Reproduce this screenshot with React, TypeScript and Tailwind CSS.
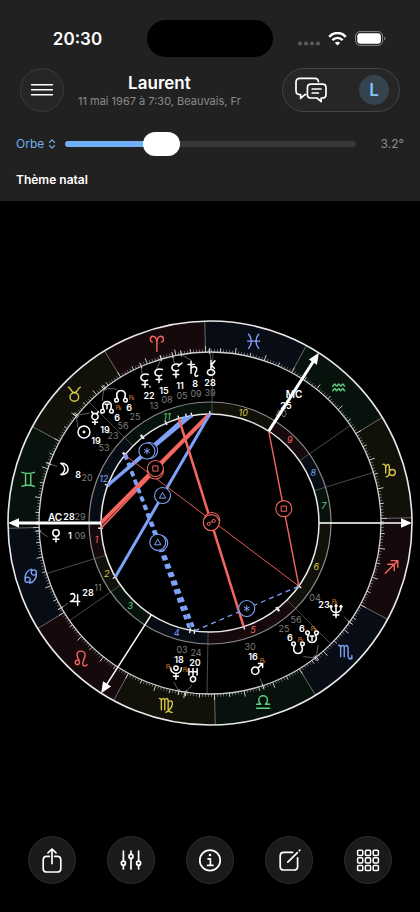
import { useState } from "react";
import type { ReactNode } from "react";

const RED = "#f4665f";
const YELLOW = "#d8c847";
const GREEN = "#5fcf80";
const BLUE = "#7da2f8";
const ELEMENT_COLORS = [RED, YELLOW, GREEN, BLUE];
const ELEMENT_FILLS = ["#16090b", "#11110a", "#07120c", "#080c15"];

const R_OUTER = 202;
const R_SIGN = 171;
const R_HOUSE = 121;
const R_CORE = 109;
const ASCENDANT = 88.5;

function polar(angle: number, radius: number): [number, number] {
  const a = (angle * Math.PI) / 180;
  return [Math.cos(a) * radius, -Math.sin(a) * radius];
}

function angleOf(longitude: number) {
  return 180 + longitude - ASCENDANT;
}

function sector(from: number, to: number, inner: number, outer: number) {
  const [ax, ay] = polar(from, outer);
  const [bx, by] = polar(to, outer);
  const [cx, cy] = polar(to, inner);
  const [dx, dy] = polar(from, inner);
  return `M${ax} ${ay}A${outer} ${outer} 0 0 0 ${bx} ${by}L${cx} ${cy}A${inner} ${inner} 0 0 1 ${dx} ${dy}Z`;
}

function Ray({ angle, from, to, color, width }: { angle: number; from: number; to: number; color: string; width: number }) {
  const [x1, y1] = polar(angle, from);
  const [x2, y2] = polar(angle, to);
  return <line x1={x1} y1={y1} x2={x2} y2={y2} stroke={color} strokeWidth={width} />;
}

const SIGNS = [
  "M0 7.5V-1C0-5-2-7.5-4-7.5S-6.5-5.5-6.5-4.2C-6.5-2.8-5.5-1.8-4.5-1.8M0-1C0-5 2-7.5 4-7.5S6.5-5.5 6.5-4.2C6.5-2.8 5.5-1.8 4.5-1.8",
  "M-6-7C-3.6-7-3.4-1.6 0-1.6S3.6-7 6-7M4.3 2.7A4.3 4.3 0 1 1-4.3 2.7A4.3 4.3 0 1 1 4.3 2.7",
  "M-6.3-7C-3-5.6 3-5.6 6.3-7M-6.3 7C-3 5.6 3 5.6 6.3 7M-2.6-6V6M2.6-6V6",
  "M-.5 3.6A2.6 2.6 0 1 1-5.7 3.6A2.6 2.6 0 1 1-.5 3.6M-5.7 3.6C-6.2-2-3-6.4 1-7M5.7-3.6A2.6 2.6 0 1 1 .5-3.6A2.6 2.6 0 1 1 5.7-3.6M5.7-3.6C6.2 2 3 6.4-1 7",
  "M-1.7 3.7A2.2 2.2 0 1 1-6.1 3.7A2.2 2.2 0 1 1-1.7 3.7M-2.2 2.2C-2.8 0-4.2-2-4.2-4C-4.2-6.4-2.2-7.5-.2-7.5S3.8-6.2 3.8-4C3.8-1 1.4 2 1.4 5C1.4 7.6 4 8 5.8 6.2",
  "M-7-6.5C-5.5-6.5-5-5.5-5-4V5M-5-4C-5-6.5-1.6-7.5-1.6-4V5M-1.6-4C-1.6-6.5 1.8-7.5 1.8-4V4C1.8 6.5 4 7.5 6 7.5M1.8-2.5C4-5 6.4-4 6-1C5.6 2.3 3 5.5-.4 7.5",
  "M-6.5 6H6.5M-6.5 2H-2.3C-3.8.8-4.4-.6-4.4-2.2A4.4 4.4 0 0 1 4.4-2.2C4.4-.6 3.8.8 2.3 2H6.5",
  "M-7-6.5C-5.5-6.5-5-5.5-5-4V5M-5-4C-5-6.5-1.4-7.5-1.4-4V5M-1.4-4C-1.4-6.5 2.4-7.5 2.4-4V4C2.4 6 3.6 7 5.6 6.6M6.2 3.8V7.2H3.6",
  "M-6.5 6.5L5.6-5.6M-.6-6H6V.6M-4-2.4H2.4V4",
  "M-6.5-5.5C-4.4-6.5-3.6-4.5-3.6-2V3M-3.6-2C-3.6-5.5 0-7 0-3V2C0 5-1.2 6.5-3 6.8M0 2.6A3 3 0 1 1 6 2.6A3 3 0 1 1 0 2.6",
  "M-6-1.2L-4-3.4C-3-3.4-3-1.2-2-1.2L0-3.4C1-3.4 1-1.2 2-1.2L4-3.4C5-3.4 5-1.2 6-1.2M-6 3.4L-4 1.2C-3 1.2-3 3.4-2 3.4L0 1.2C1 1.2 1 3.4 2 3.4L4 1.2C5 1.2 5 3.4 6 3.4",
  "M-5-7C-1.4-3-1.4 3-5 7M5-7C1.4-3 1.4 3 5 7M-6 0H6",
];

const CUSPS = [180, 197.2, 214.8, 237.4, 269, 315, 360, 377.2, 394.8, 417.4, 449, 495, 540];

const GLYPHS = {
  sun: "M5.5 0A5.5 5.5 0 1 1-5.5 0A5.5 5.5 0 1 1 5.5 0M-.6 0A.6.6 0 1 1 .6 0A.6.6 0 1 1-.6 0",
  mercury: "M-3-6C-3-3.6 3-3.6 3-6M2.9-1.3A2.9 2.9 0 1 1-2.9-1.3A2.9 2.9 0 1 1 2.9-1.3M0 1.6V6M-2.4 3.9H2.4",
  moon: "M-3-5.2C1.4-5.6 3.8-2.8 3.8 0S1.4 5.6-3 5.2C-.4 3.8.6 2 .6 0S-.4-3.8-3-5.2Z",
  venus: "M3-2.8A3 3 0 1 1-3-2.8A3 3 0 1 1 3-2.8M0 .2V5.6M-2.6 3H2.6",
  mars: "M1.8 1.6A3.4 3.4 0 1 1-5 1.6A3.4 3.4 0 1 1 1.8 1.6M.8-.8L5-5M1.4-5.2H5.2V-1.4",
  jupiter: "M-4-4.5C-1-6 1-3.4-.6-.6C-1.6 1.2-3 2.2-4.2 2.4H4.4M2.4-4V5.8",
  saturn: "M-4.6-4.2H1.2M-1.8-7V4M-1.8-.4C0-3 3.8-2.4 3.4.6C3 3 1.4 3.4 1.8 5.6C2 6.8 3.6 7 4.4 6",
  uranus: "M-3.8-6V0M3.8-6V0M-3.8-3H3.8M0-6V1.4M2.4 3.8A2.4 2.4 0 1 1-2.4 3.8A2.4 2.4 0 1 1 2.4 3.8",
  neptune: "M-4.6-5V-2.6C-4.6 2.6 4.6 2.6 4.6-2.6V-5M0-5.6V6M-2.6 3.6H2.6M-5.6-4L-4.6-5.2L-3.6-4M3.6-4L4.6-5.2L5.6-4M-1-4.6L0-5.8L1-4.6",
  pluto: "M-5-4C-5 3.2 5 3.2 5-4M2-3.6A2 2 0 1 1-2-3.6A2 2 0 1 1 2-3.6M0 1.4V6.6M-2.4 4H2.4",
  chiron: "M0-7V1M0-2.6L3.6-6.6M0-2.6L3.2.2M3.4 4A3.4 2.6 0 1 1-3.4 4A3.4 2.6 0 1 1 3.4 4",
  lilith: "M3-6C-1.4-7.6-4.6-4.6-3.6-2C-2.8 0 .4.6 2.4-.8M0 .2V6M-2.6 3.2H2.6",
  northNode: "M-3.2 3.2C-7.6-6.6 7.6-6.6 3.2 3.2M-2.4 4.8A1.7 1.7 0 1 1-5.8 4.8A1.7 1.7 0 1 1-2.4 4.8M5.8 4.8A1.7 1.7 0 1 1 2.4 4.8A1.7 1.7 0 1 1 5.8 4.8",
  southNode: "M-3.2-3.2C-7.6 6.6 7.6 6.6 3.2-3.2M-2.4-4.8A1.7 1.7 0 1 1-5.8-4.8A1.7 1.7 0 1 1-2.4-4.8M5.8-4.8A1.7 1.7 0 1 1 2.4-4.8A1.7 1.7 0 1 1 5.8-4.8",
};

type Point = [number, number];
type Body = {
  glyph: keyof typeof GLYPHS;
  extra?: string;
  longitude: number;
  at: Point;
  degree: string;
  degreeAt: Point;
  minute: string;
  minuteAt: Point;
  retro?: Point;
};

const BODIES: Body[] = [
  { glyph: "lilith", extra: "M4.6 5V5.6", longitude: 22.2, at: [-65, -142], degree: "22", degreeAt: [-61, -127], minute: "13", minuteAt: [-56, -117] },
  { glyph: "lilith", longitude: 15.1, at: [-51, -147], degree: "15", degreeAt: [-46, -132], minute: "08", minuteAt: [-43, -123] },
  { glyph: "lilith", extra: "M2-4.4L5.4-7.4", longitude: 11.1, at: [-34, -152], degree: "11", degreeAt: [-30, -137], minute: "05", minuteAt: [-28, -127] },
  { glyph: "saturn", longitude: 8.2, at: [-17, -154], degree: "8", degreeAt: [-15, -139], minute: "09", minuteAt: [-14, -129] },
  { glyph: "chiron", longitude: 358.6, at: [1, -155], degree: "28", degreeAt: [0, -140], minute: "39", minuteAt: [0, -130] },
  { glyph: "northNode", longitude: 36.4, at: [-89, -128], degree: "6", degreeAt: [-81, -115], minute: "25", minuteAt: [-75, -106], retro: [-78, -126] },
  { glyph: "northNode", extra: "M-1.8-1.6H1.8M0-1.6V2.6", longitude: 36.9, at: [-103, -117], degree: "6", degreeAt: [-93, -105], minute: "56", minuteAt: [-87, -97], retro: [-91, -116] },
  { glyph: "mercury", longitude: 49.4, at: [-115, -105], degree: "19", degreeAt: [-105, -93], minute: "23", minuteAt: [-97, -87] },
  { glyph: "sun", longitude: 49.9, at: [-126, -91], degree: "19", degreeAt: [-114, -82], minute: "53", minuteAt: [-106, -75] },
  { glyph: "moon", longitude: 68.3, at: [-146, -54], degree: "8", degreeAt: [-132, -48], minute: "20", minuteAt: [-123, -45] },
  { glyph: "venus", longitude: 91.2, at: [-154, 13], degree: "1", degreeAt: [-140, 13], minute: "09", minuteAt: [-130, 13] },
  { glyph: "jupiter", longitude: 118.2, at: [-135, 76], degree: "28", degreeAt: [-122, 70], minute: "11", minuteAt: [-112, 65] },
  { glyph: "pluto", longitude: 168, at: [-34, 149], degree: "18", degreeAt: [-31, 137], minute: "03", minuteAt: [-28, 127], retro: [-41, 143] },
  { glyph: "uranus", longitude: 170.4, at: [-17, 152], degree: "20", degreeAt: [-15, 140], minute: "24", minuteAt: [-14, 130], retro: [-24, 146] },
  { glyph: "mars", longitude: 196.5, at: [47, 146], degree: "16", degreeAt: [43, 134], minute: "30", minuteAt: [40, 124], retro: [53, 137] },
  { glyph: "southNode", longitude: 216.4, at: [88, 126], degree: "6", degreeAt: [80, 115], minute: "25", minuteAt: [74, 106], retro: [91, 116] },
  { glyph: "southNode", extra: "M-1.8-1.8H1.8M0-1.8V2.2", longitude: 216.9, at: [102, 115], degree: "6", degreeAt: [92, 106], minute: "56", minuteAt: [86, 97], retro: [104, 105] },
  { glyph: "neptune", longitude: 233.1, at: [126, 88], degree: "23", degreeAt: [114, 82], minute: "04", minuteAt: [105, 75], retro: [125, 78] },
];

type AspectKind = "sextile" | "square" | "trine" | "opposition";
type Aspect = { kind: AspectKind; from: number; to: number; width: number; dash?: string };

const MIDHEAVEN = 325.9;
const ASPECTS: Aspect[] = [
  { kind: "sextile", from: 8.2, to: 68.3, width: 3 },
  { kind: "sextile", from: 11.1, to: 68.3, width: 3 },
  { kind: "square", from: 358.6, to: 91.2, width: 1.6 },
  { kind: "square", from: 358.6, to: 88.5, width: 4 },
  { kind: "trine", from: 358.6, to: 118.2, width: 3 },
  { kind: "trine", from: 49.9, to: 170.4, width: 3.5, dash: "5 4" },
  { kind: "trine", from: 49.4, to: 168, width: 3.5, dash: "5 4" },
  { kind: "opposition", from: 49.9, to: 233.1, width: 0.9 },
  { kind: "opposition", from: 15.1, to: 196.5, width: 2.5 },
  { kind: "square", from: MIDHEAVEN, to: 233.1, width: 1.4 },
  { kind: "sextile", from: 170.4, to: 233.1, width: 1.3, dash: "5 4" },
];

const ASPECT_MARKS: Record<AspectKind, string> = {
  sextile: "M0-3.2V3.2M-2.8-1.6L2.8 1.6M-2.8 1.6L2.8-1.6",
  square: "M-2.6-2.6H2.6V2.6H-2.6Z",
  trine: "M0-3L3.2 2.6H-3.2Z",
  opposition: "M-1-0.1L1-1M-1 1.3A1.6 1.6 0 1 1-4.2 1.3A1.6 1.6 0 1 1-1 1.3M4-1.7A1.6 1.6 0 1 1 .8-1.7A1.6 1.6 0 1 1 4-1.7",
};

function Arrow({ angle, width }: { angle: number; width: number }) {
  return (
    <g transform={`rotate(${-angle})`}>
      <line x1={R_CORE} y1="0" x2="194" y2="0" stroke="#fff" strokeWidth={width} />
      <path d="M202 0L191-4.8V4.8Z" fill="#fff" />
    </g>
  );
}

function Label({ at, color, size, weight, children }: { at: Point; color: string; size: number; weight: number; children: ReactNode }) {
  return (
    <text x={at[0]} y={at[1]} dy="0.36em" textAnchor="middle" fill={color} fontSize={size} fontWeight={weight}>
      {children}
    </text>
  );
}

function NatalChart() {
  return (
    <svg viewBox="-210 -210 420 420" className="block w-full max-w-xl" role="img" aria-label="Thème natal de Laurent" fill="none">
      {SIGNS.map((_, i) => (
        <path key={i} d={sector(angleOf(i * 30), angleOf(i * 30 + 30), R_SIGN, R_OUTER)} fill={ELEMENT_FILLS[i % 4]} />
      ))}
      {SIGNS.map((_, i) => (
        <Ray key={i} angle={angleOf(i * 30)} from={R_SIGN} to={R_OUTER} color="#6b6b6b" width={1} />
      ))}
      {Array.from({ length: 360 }, (_, d) => (
        <Ray key={d} angle={angleOf(d)} from={R_SIGN} to={R_SIGN + (d % 10 === 0 ? 6 : d % 5 === 0 ? 4 : 3)} color={d % 5 === 0 ? "#c8c8c8" : "#8c8c8c"} width={d % 5 === 0 ? 1 : 0.7} />
      ))}
      {CUSPS.slice(0, 12).map((cusp, i) => (
        <path key={i} d={sector(cusp, CUSPS[i + 1], R_CORE, R_HOUSE)} fill={ELEMENT_FILLS[i % 4]} />
      ))}
      {CUSPS.slice(0, 12).map((cusp, i) => (
        <Ray key={i} angle={cusp} from={R_CORE} to={R_SIGN} color="#4a4a4a" width={1} />
      ))}
      <circle r={R_OUTER} stroke="#e8e8e8" strokeWidth="1.6" />
      <circle r={R_SIGN} stroke="#d0d0d0" strokeWidth="1.3" />
      <circle r={R_HOUSE} stroke="#8a8a8a" strokeWidth="1.2" />
      <circle r={R_CORE} stroke="#e8e8e8" strokeWidth="1.5" />

      {SIGNS.map((d, i) => {
        const [x, y] = polar(angleOf(i * 30 + 15), 187);
        return <path key={i} d={d} transform={`translate(${x} ${y})`} stroke={ELEMENT_COLORS[i % 4]} strokeWidth="1.4" strokeLinecap="round" strokeLinejoin="round" />;
      })}
      <g fontStyle="italic">
        {CUSPS.slice(0, 12).map((cusp, i) => (
          <Label key={i} at={polar((cusp + CUSPS[i + 1]) / 2, 115)} color={ELEMENT_COLORS[i % 4]} size={9} weight={400}>
            {i + 1}
          </Label>
        ))}
      </g>

      {BODIES.map((body, i) => {
        const angle = angleOf(body.longitude);
        const [x1, y1] = polar(angle, R_SIGN);
        const ratio = 163 / Math.hypot(body.at[0], body.at[1]);
        return (
          <g key={i}>
            <line x1={x1} y1={y1} x2={body.at[0] * ratio} y2={body.at[1] * ratio} stroke="#7a7a7a" strokeWidth="0.8" />
            <Ray angle={angle} from={R_SIGN - 2} to={R_SIGN + 4} color="#dcdcdc" width={1} />
            <Ray angle={angle} from={R_CORE - 2} to={R_CORE + 3} color="#ececec" width={1.4} />
          </g>
        );
      })}

      {ASPECTS.map((aspect, i) => {
        const [x1, y1] = polar(angleOf(aspect.from), R_CORE);
        const [x2, y2] = polar(angleOf(aspect.to), R_CORE);
        const color = aspect.kind === "sextile" || aspect.kind === "trine" ? BLUE : RED;
        return <line key={i} x1={x1} y1={y1} x2={x2} y2={y2} stroke={color} strokeWidth={aspect.width} strokeDasharray={aspect.dash} />;
      })}
      {ASPECTS.map((aspect, i) => {
        const [x1, y1] = polar(angleOf(aspect.from), R_CORE);
        const [x2, y2] = polar(angleOf(aspect.to), R_CORE);
        const color = aspect.kind === "sextile" || aspect.kind === "trine" ? BLUE : RED;
        return (
          <g key={i} transform={`translate(${(x1 + x2) / 2} ${(y1 + y2) / 2})`} stroke={color}>
            <circle r="8" fill="#000" strokeWidth="1.1" />
            <path d={ASPECT_MARKS[aspect.kind]} strokeWidth="1" />
          </g>
        );
      })}

      {BODIES.map((body, i) => (
        <g key={i}>
          <Label at={body.minuteAt} color="#7d7d7d" size={9} weight={400}>{body.minute}</Label>
          <path
            d={GLYPHS[body.glyph] + (body.extra ?? "")}
            transform={`translate(${body.at[0]} ${body.at[1]}) scale(1.08)`}
            stroke="#fff"
            strokeWidth="1.4"
            strokeLinecap="round"
            strokeLinejoin="round"
          />
          {body.retro && (
            <text x={body.retro[0]} y={body.retro[1]} dy="0.36em" textAnchor="middle" fill="#c8762c" fontSize="7" fontFamily="DejaVu Sans, sans-serif">℞</text>
          )}
          <Label at={body.degreeAt} color="#fff" size={9} weight={600}>{body.degree}</Label>
        </g>
      ))}
      <Label at={[-130, -6]} color="#7d7d7d" size={9} weight={400}>29</Label>
      <Label at={[-141, -6]} color="#fff" size={9} weight={600}>28</Label>
      <Label at={[-155, -6]} color="#fff" size={10} weight={600}>AC</Label>
      <Label at={[71, -109]} color="#7d7d7d" size={9} weight={400}>40</Label>
      <Label at={[76, -117]} color="#fff" size={9} weight={600}>25</Label>
      <Label at={[84, -129]} color="#fff" size={10} weight={600}>MC</Label>

      <Arrow angle={180} width={3} />
      <Arrow angle={57.4} width={3} />
      <Arrow angle={0} width={1.5} />
      <Arrow angle={237.4} width={1.5} />
    </svg>
  );
}

function StatusBar() {
  return (
    <div className="grid grid-cols-[1fr_126px_1fr] items-center pt-5">
      <time className="pl-2 text-center text-[17px] leading-6 font-semibold">20:30</time>
      <div className="h-[37px] rounded-full bg-black" />
      <div className="flex items-center justify-center gap-2 pr-2.5">
        <svg width="22" height="14" viewBox="0 0 22 14" fill="#5c5c5c" aria-hidden="true">
          <circle cx="2" cy="11.5" r="2" />
          <circle cx="8" cy="11.5" r="2" />
          <circle cx="14" cy="11.5" r="2" />
          <circle cx="20" cy="11.5" r="2" />
        </svg>
        <svg width="19" height="14" viewBox="0 0 19 14" fill="none" stroke="#fff" strokeWidth="2.6" aria-hidden="true">
          <path d="M1.2 4.8C6-.2 13-.2 17.8 4.8M4.4 8.2C7.4 5.2 11.6 5.2 14.6 8.2" />
          <path d="M6.8 10.8Q9.5 8.6 12.2 10.8L9.5 13.6Z" fill="#fff" stroke="none" />
        </svg>
        <svg width="31" height="15" viewBox="0 0 31 15" fill="none" aria-hidden="true">
          <rect x=".6" y=".6" width="27" height="13.8" rx="4.4" stroke="#868686" />
          <rect x="2.3" y="2.3" width="23.6" height="10.4" rx="3" fill="#fff" />
          <path d="M29.2 5.4C30.7 6 30.7 9 29.2 9.6Z" fill="#868686" />
        </svg>
      </div>
    </div>
  );
}

function OrbSlider() {
  const min = 0.2;
  const max = 10;
  const [orb, setOrb] = useState(3.2);
  const filled = ((orb - min) / (max - min)) * 100;
  return (
    <div className="flex items-center px-4">
      <label className="relative flex items-center text-[#72aff0]">
        <select aria-label="Réglage" className="w-10 appearance-none bg-transparent text-[12px] leading-5 outline-none">
          <option>Orbe</option>
        </select>
        <svg width="8" height="10" viewBox="0 0 8 10" fill="none" stroke="currentColor" strokeWidth="1.2" strokeLinecap="round" strokeLinejoin="round" className="pointer-events-none absolute right-0" aria-hidden="true">
          <path d="M1.4 3.4L4 1L6.6 3.4M1.4 6.6L4 9L6.6 6.6" />
        </svg>
      </label>
      <input
        type="range"
        aria-label="Orbe"
        min={min}
        max={max}
        step={0.1}
        value={orb}
        onChange={(e) => setOrb(Number(e.target.value))}
        style={{ backgroundImage: `linear-gradient(to right, #72b0fa ${filled}%, #383838 ${filled}%)` }}
        className="ml-[9px] h-1.5 min-w-0 flex-1 appearance-none rounded-full outline-none [&::-webkit-slider-thumb]:h-6 [&::-webkit-slider-thumb]:w-[37px] [&::-webkit-slider-thumb]:appearance-none [&::-webkit-slider-thumb]:rounded-full [&::-webkit-slider-thumb]:bg-white"
      />
      <output className="w-12 text-right text-[12px] leading-5 text-[#8e8e8e]">{orb.toFixed(1)}°</output>
    </div>
  );
}

function Header() {
  return (
    <header className="flex flex-col bg-[#212121] pb-[11px]">
      <StatusBar />
      <div className="mt-[11px] flex items-center px-5">
        <button type="button" aria-label="Menu" className="flex size-11 shrink-0 items-center justify-center rounded-full border border-[#3b3b3b] bg-[#262626]">
          <svg width="24" height="14" viewBox="0 0 24 14" stroke="#fff" strokeWidth="1.6" strokeLinecap="round" aria-hidden="true">
            <path d="M1.6 1.8H22.4M1.6 6.8H22.4M1.6 11.8H22.4" />
          </svg>
        </button>
        <div className="ml-3.5 pt-0.5 text-center">
          <h1 className="text-[17px] leading-5 font-semibold">Laurent</h1>
          <p className="text-[11px] leading-4 whitespace-nowrap text-[#8a8a8a]">11 mai 1967 à 7:30, Beauvais, Fr</p>
        </div>
        <div className="ml-auto flex h-11 w-[118px] shrink-0 items-center justify-between rounded-full border border-[#444] bg-[#262626] pr-2.5 pl-3">
          <button type="button" aria-label="Messages">
            <svg width="32" height="26" viewBox="0 0 32 26" fill="none" stroke="#fff" strokeWidth="1.7" strokeLinecap="round" strokeLinejoin="round" aria-hidden="true">
              <path d="M23.5 4.6C23.2 2.4 22 1.4 19.8 1.4H5C2.4 1.4 1 2.8 1 5.4V13.6C1 16.2 2.4 17.6 4.8 17.6H5.6V21.4L9.8 17.6H10.6" />
              <path d="M16 7.2H27.4C29.8 7.2 31 8.4 31 10.8V17.4C31 19.8 29.8 21 27.4 21H26.2V24.6L22 21H16C13.6 21 12.4 19.8 12.4 17.4V10.8C12.4 8.4 13.6 7.2 16 7.2Z" />
              <path d="M17.2 12H26M17.2 16H23.4" />
            </svg>
          </button>
          <button type="button" aria-label="Profil" className="size-[30px] rounded-full bg-[#35434f] text-[17px] leading-[30px] font-semibold text-[#83c6fb]">
            L
          </button>
        </div>
      </div>
      <div className="mt-[22px]">
        <OrbSlider />
      </div>
      <h2 className="mt-4 px-4 text-[12px] leading-5 font-semibold">Thème natal</h2>
    </header>
  );
}

const TOOLS: { label: string; icon: ReactNode }[] = [
  {
    label: "Partager",
    icon: <path d="M9.4 8.4H6.8C4.4 8.4 3.2 9.6 3.2 12V20.4C3.2 22.8 4.4 24 6.8 24H17.2C19.6 24 20.8 22.8 20.8 20.4V12C20.8 9.6 19.6 8.4 17.2 8.4H14.6M12 15.6V1.2M8 4.8L12 1L16 4.8" />,
  },
  {
    label: "Réglages",
    icon: <path d="M4.4 3.2V13M4.4 17.4V21M6.4 15.2A2 2 0 1 1 2.4 15.2A2 2 0 1 1 6.4 15.2M12 3.2V6.2M12 10.6V21M14 8.4A2 2 0 1 1 10 8.4A2 2 0 1 1 14 8.4M19.6 3.2V13M19.6 17.4V21M21.6 15.2A2 2 0 1 1 17.6 15.2A2 2 0 1 1 21.6 15.2" />,
  },
  {
    label: "Informations",
    icon: (
      <>
        <circle cx="12" cy="12.4" r="10.2" />
        <path d="M10 10.8H12.4V17.2M9.6 17.4H15" />
        <circle cx="12" cy="7" r=".7" fill="#fff" strokeWidth="1.2" />
      </>
    ),
  },
  {
    label: "Modifier",
    icon: <path d="M15.6 4.4H6.8C4.4 4.4 3.2 5.6 3.2 8V18.4C3.2 20.8 4.4 22 6.8 22H17C19.4 22 20.6 20.8 20.6 18.4V9.8M10.8 14.2L20.4 4.6M22.4 2.6L22.8 2.2" />,
  },
  {
    label: "Plus d'outils",
    icon: (
      <>
        {[2.2, 9.8, 17.4].map((y) => [1.6, 9.4, 17.2].map((x) => <rect key={`${x}-${y}`} x={x} y={y} width="5.2" height="5.2" rx="1.2" strokeWidth="1.5" />))}
      </>
    ),
  },
];

export default function App() {
  return (
    <div className="flex min-h-screen flex-col bg-black font-['Inter','Noto_Sans',sans-serif] text-white">
      <Header />
      <main className="flex flex-1 items-center justify-center pt-2">
        <NatalChart />
      </main>
      <nav aria-label="Outils" className="flex justify-between px-7 pb-7">
        {TOOLS.map((tool) => (
          <button key={tool.label} type="button" aria-label={tool.label} className="flex size-12 items-center justify-center rounded-full border border-[#2c2c2c] bg-[#1a1a1a]">
            <svg width="24" height="25" viewBox="0 0 24 25" fill="none" stroke="#fff" strokeWidth="1.7" strokeLinecap="round" strokeLinejoin="round" aria-hidden="true" className="shrink-0">
              {tool.icon}
            </svg>
          </button>
        ))}
      </nav>
    </div>
  );
}
